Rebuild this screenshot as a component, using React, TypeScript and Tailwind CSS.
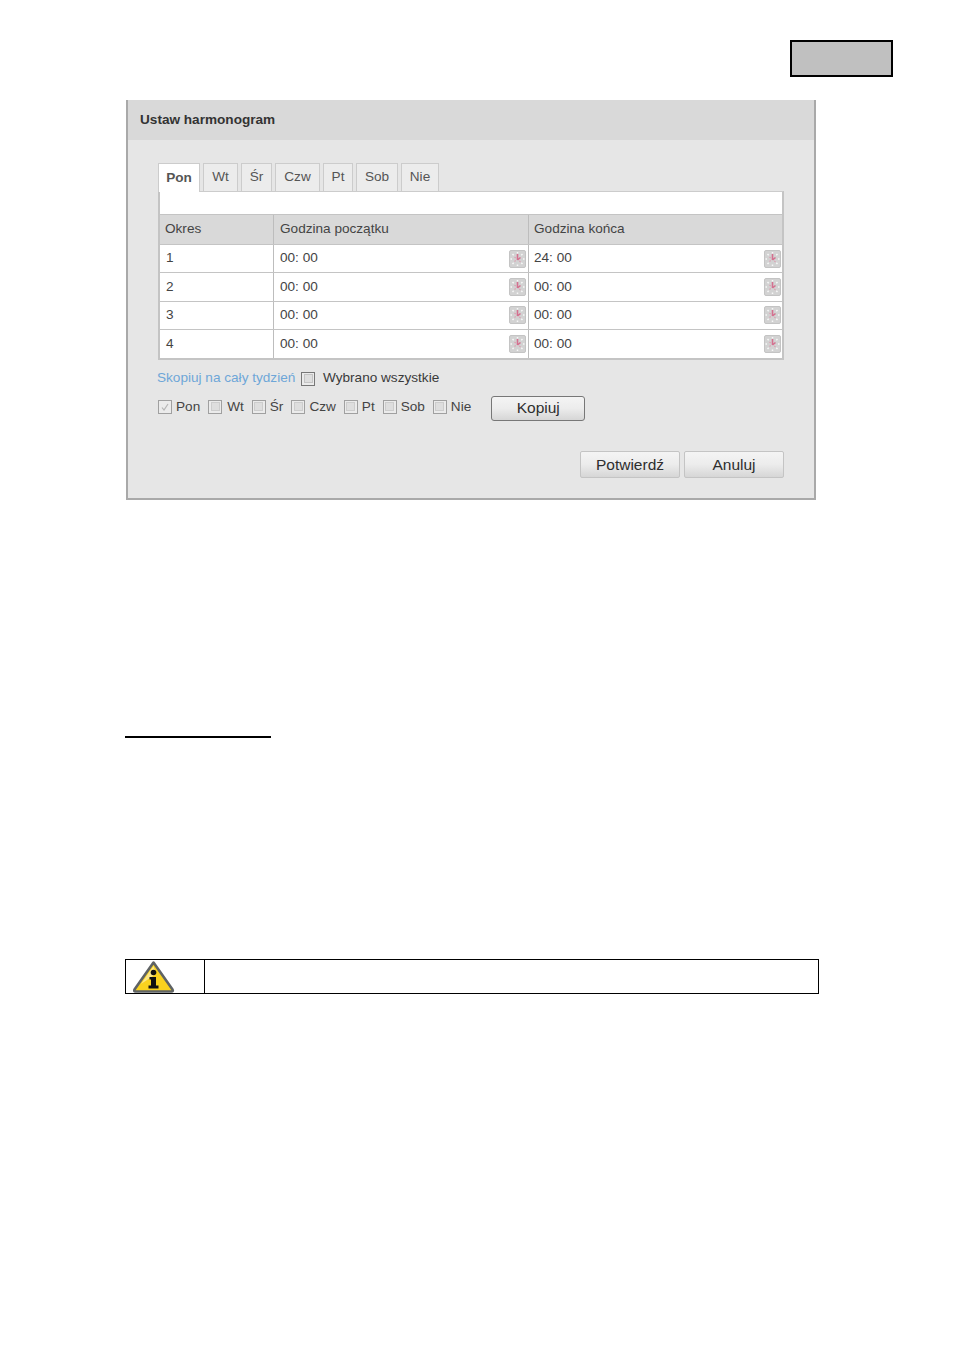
import React from "react";

const tabs = [
  { label: "Pon", w: "w-[42px]", active: true },
  { label: "Wt", w: "w-[35px]" },
  { label: "Śr", w: "w-[31px]" },
  { label: "Czw", w: "w-[45px]" },
  { label: "Pt", w: "w-[30px]" },
  { label: "Sob", w: "w-[42px]" },
  { label: "Nie", w: "w-[38px]" },
];

const rows = [
  { id: "1", start: "00: 00", end: "24: 00" },
  { id: "2", start: "00: 00", end: "00: 00" },
  { id: "3", start: "00: 00", end: "00: 00" },
  { id: "4", start: "00: 00", end: "00: 00" },
];

const days = [
  { label: "Pon", gap: "mr-[8px]", inner: "gap-[4px]", checked: true },
  { label: "Wt", gap: "mr-[8px]", inner: "gap-[5px]" },
  { label: "Śr", gap: "mr-[8px]", inner: "gap-[4px]" },
  { label: "Czw", gap: "mr-[8px]", inner: "gap-[4px]" },
  { label: "Pt", gap: "mr-[8px]", inner: "gap-[4px]" },
  { label: "Sob", gap: "mr-[8px]", inner: "gap-[4px]" },
  { label: "Nie", gap: "mr-[20px]", inner: "gap-[4px]" },
];

const ClockButton = () => (
  <span className="w-[17px] h-[18px] shrink-0 rounded-[2px] bg-[#d2d2d2] border border-[#c4c4c4] flex items-center justify-center">
    <svg width="15" height="16" viewBox="0 0 15 16" fill="none">
      <path d="M7.5 1v1.500M7.500 13.500V15M0.500 8H2M13 8h1.500M2.500 3l1.200 1.200M11.300 11.800l1.200 1.200M12.500 3l-1.200 1.200M3.700 11.800L2.500 13" stroke="#f7f7f7" strokeWidth="1.500" />
      <path d="M7.500 3v6M7.500 9L10.500 6.500" stroke="#d4708f" strokeWidth="1.600" />
      <path d="M4.500 6l1.200 1M4.500 10.500l1.200-1M10.500 11l-1.200-1.200" stroke="#dd9fb3" strokeWidth="1.100" />
    </svg>
  </span>
);

const Check = ({ checked, dark }: { checked?: boolean; dark?: boolean }) => (
  <span
    className={`shrink-0 w-[14px] h-[14px] flex items-center justify-center bg-[#ebebeb] border ${
      dark ? "border-[#777777]" : "border-[#a0a0a0]"
    }`}
  >
    {checked ? (
      <svg width="10" height="10" viewBox="0 0 10 10" fill="none">
        <path d="M2 5.500l2 2.500 4-6" stroke="#b4b4b4" strokeWidth="1.200" />
      </svg>
    ) : (
      <span className={`w-[9px] h-[9px] border ${dark ? "border-[#c4c4c4]" : "border-[#cdcdcd]"} bg-[#dedede]`} />
    )}
  </span>
);

const Button = ({ label, className }: { label: string; className: string }) => (
  <button
    className={`flex items-center justify-center bg-gradient-to-b from-[#f4f4f4] via-[#ececec] to-[#d6d6d6] text-[#2e2e2e] text-[15.5px] ${className}`}
  >
    {label}
  </button>
);

export default function App() {
  return (
    <div className="w-[955px] h-[1350px] bg-white overflow-hidden font-['Liberation_Sans',Arial,sans-serif] pt-[40px]">
      <div className="flex justify-end pr-[62px]">
        <div className="w-[103px] h-[37px] bg-[#c0c0c0] border-2 border-black" />
      </div>

      <div className="ml-[126px] mt-[23px] w-[690px] h-[400px] bg-[#e6e6e6] border-l-2 border-r-2 border-b-2 border-[#a9a9a9]">
        <div className="h-[40px] bg-[#d9d9d9] pl-[12px] pt-[11px] text-[13.6px] leading-[17px] font-bold text-[#333333]">
          Ustaw harmonogram
        </div>

        <div className="ml-[30px] mt-[23px] w-[626px]">
          <div className="flex gap-[3px] h-[28px] text-[13.6px] text-[#555555]">
            {tabs.map((t) => (
              <div
                key={t.label}
                className={`${t.w} flex items-center justify-center border-t border-l border-r border-[#cccccc] ${
                  t.active ? "bg-white font-bold h-[29px] relative z-10" : "bg-[#ececec]"
                }`}
              >
                {t.label}
              </div>
            ))}
          </div>

          <div className="border-2 border-t border-[#c4c4c4] bg-white border-t-[#cccccc]">
            <div className="h-[22px]" />
            <div className="flex h-[31px] bg-[#d9d9d9] border-t border-b border-[#c4c4c4] text-[13.6px] text-[#444444]">
              <div className="w-[114px] flex items-center pl-[5px] border-r border-[#bdbdbd]">Okres</div>
              <div className="w-[255px] flex items-center pl-[6px] border-r border-[#bdbdbd]">Godzina początku</div>
              <div className="flex-1 flex items-center pl-[5px]">Godzina końca</div>
            </div>
            {rows.map((r, i) => (
              <div
                key={r.id}
                className={`flex h-[28.250px] text-[13.6px] text-[#444444] ${i < 3 ? "border-b border-[#c4c4c4]" : ""}`}
              >
                <div className="w-[114px] flex items-center pl-[6px] border-r border-[#bdbdbd]">{r.id}</div>
                <div className="w-[255px] flex items-center justify-between pl-[6px] pr-[2px] border-r border-[#bdbdbd]">
                  <span>{r.start}</span>
                  <ClockButton />
                </div>
                <div className="flex-1 flex items-center justify-between pl-[5px] pr-[1px]">
                  <span>{r.end}</span>
                  <ClockButton />
                </div>
              </div>
            ))}
          </div>

          <div className="flex items-center h-[15px] mt-[11px] text-[13.6px] -ml-[1px]">
            <span className="text-[#6ea6d8] whitespace-nowrap w-[144px]">Skopiuj na cały tydzień</span>
            <Check dark />
            <span className="ml-[8px] text-[#3a3a3a] whitespace-nowrap">Wybrano wszystkie</span>
          </div>

          <div className="flex items-center h-[24px] mt-[10px] text-[13.6px] text-[#444444]">
            {days.map((d) => (
              <div key={d.label} className={`flex items-center mb-[2px] ${d.inner} ${d.gap}`}>
                <Check checked={d.checked} />
                <span className="whitespace-nowrap">{d.label}</span>
              </div>
            ))}
            <Button label="Kopiuj" className="w-[94px] h-[25px] border border-[#777777] rounded-[3px]" />
          </div>

          <div className="flex justify-end gap-[4px] mt-[31px]">
            <Button label="Potwierdź" className="w-[100px] h-[27px] border border-[#c4c4c4] rounded-[2px]" />
            <Button label="Anuluj" className="w-[100px] h-[27px] border border-[#c4c4c4] rounded-[2px]" />
          </div>
        </div>
      </div>

      <div className="ml-[125px] mt-[236px] w-[146px] h-[2px] bg-black" />

      <div className="ml-[125px] mt-[221px] w-[694px] h-[35px] border border-black flex">
        <div className="w-[79px] border-r border-black flex items-start pl-[7px]">
          <svg width="43" height="34" viewBox="0 0 43 34" className="shrink-0">
            <path d="M20.500 2.500L39.500 29.500Q40.500 31.500 38.500 31.500H2.500Q0.500 31.500 1.500 29.500Z" fill="#f9d21f" stroke="#5f6364" strokeWidth="2.600" strokeLinejoin="round" />
            <path d="M20.500 6L8 24L23 14Z" fill="#fbe78a" />
            <circle cx="20.500" cy="12.500" r="2.800" fill="#111111" />
            <path d="M16.500 17h6.500v8.500h2.500v3H15.500v-3H18v-6h-1.500z" fill="#111111" />
          </svg>
        </div>
      </div>
    </div>
  );
}
